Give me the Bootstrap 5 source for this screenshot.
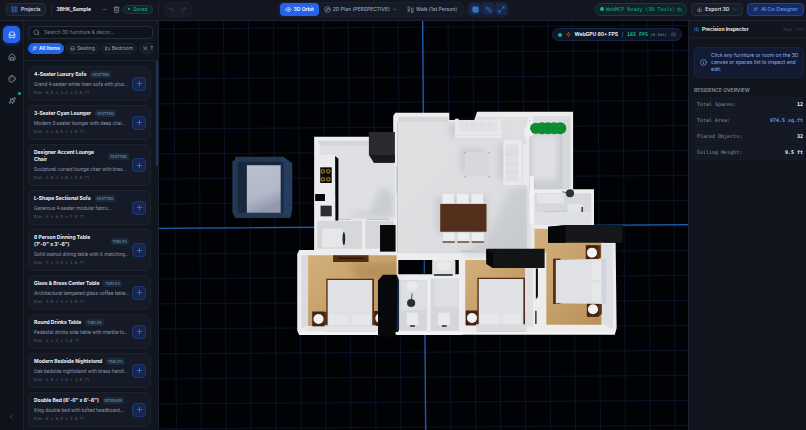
<!DOCTYPE html>
<html lang="en" data-bs-theme="dark">
<head>
<meta charset="utf-8">
<meta name="viewport" content="width=device-width, initial-scale=1">
<title>3BHK_Sample</title>
<link href="https://cdn.jsdelivr.net/npm/bootstrap@5.3.0/dist/css/bootstrap.min.css" rel="stylesheet">
<style>
:root{--ink:#e8edf6;--soft:#94a3b8;--dim:#566379;--line:#1e2433;--panel:#12151f;--card:#161a26;--blue:#2563eb;--sky:#5b9cf0;--green:#10b981}
body{font-family:Inter,"Liberation Sans",sans-serif;font-size:5px;line-height:7px;background:var(--panel);color:var(--ink)}
button,input{font-family:inherit;line-height:inherit}
.mono{font-family:"DejaVu Sans Mono","Liberation Mono",monospace}
.gap-a{gap:1px}.gap-b{gap:2px}.gap-c{gap:3px}.gap-d{gap:5px}
.fill{min-height:0}
.ico{width:7px;height:7px;flex:none;fill:none;stroke:currentColor;stroke-width:2;stroke-linecap:round;stroke-linejoin:round}
.ico-s{width:5px;height:5px}
.ico-l{width:8px;height:8px}
.ico-blue{color:#3b82f6}.ico-soft{color:#94a3b8}.ico-dim{color:#667287}.ico-amber{color:#f59e0b}
.topbar{height:21px;padding:0 2px 2px 6px;border-bottom:1px solid var(--line);background:#131620}
.topbar .rule{margin:0 5px}
.tb{display:inline-flex;align-items:center;justify-content:center;gap:2px;height:13px;padding:0 4px;border:1px solid transparent;border-radius:4px;background:none;color:var(--soft);font-size:5px;font-weight:500;white-space:nowrap}
.tb-box{background:#191e2b;border-color:#272e3e;color:#dbe3f0;gap:3px}
.tb-blue{background:var(--blue);color:#fff;font-weight:600}
.tb-ai{background:#172b62;border-color:#20449a;color:var(--sky);padding:0 5px;gap:3px}
.tb-wide{padding:0 5px;font-weight:600}
.tools{height:15px;padding:0 1px;border:1px solid #1b202d;border-radius:5px;background:#171b27}
.tool{width:12px;height:12px;padding:0;border:0;border-radius:3px;display:flex;align-items:center;justify-content:center;background:none;color:#3b4558}
.tool-on{background:#16294d;color:#4b86dd}
.rule{width:1px;height:12px;background:#20263a}
.rule-s{height:5px;background:#33405a}
.pill{display:inline-flex;align-items:center;height:13px;border:1px solid #12413c;border-radius:9px;background:#10232a;color:var(--green);white-space:nowrap;padding:0 4px;gap:2px}
.pill-s{height:9px;gap:3px}
.led{width:4px;height:4px;border-radius:50%;background:var(--green);flex:none}
.led-s{width:2px;height:2px}
.rail{width:24px;flex:none;padding:5px 0;background:#0f131b;border-right:1px solid #1a1f2c}
.rail-btn{width:17px;height:17px;padding:0;border:0;border-radius:5px;background:none;color:#a3afc2;display:flex;align-items:center;justify-content:center;position:relative}
.rail-on{background:var(--blue);color:#fff;box-shadow:0 1px 4px #2563eb80}
.rail-btn .led{position:absolute;right:-1px;top:0;width:3px;height:3px}
.library{width:135px;flex:none;background:#11151e;border-right:1px solid #1b2130}
.lib-head{padding:5px 5px 6px 4px;border-bottom:1px solid var(--line)}
.search{height:13px;border:1px solid #262d3c;border-radius:4px;padding:0 4px;background:#0f131c;color:#8f9bb0}
.search input{flex:1;min-width:0;border:0;outline:0;background:none;color:inherit;font-size:5px;padding:0}
.search input::placeholder{color:#738096}
.chips{gap:2px;margin-top:4px;overflow:hidden}
.chip{display:inline-flex;align-items:center;gap:2px;height:11px;padding:0 3px;border:1px solid #1d2331;border-radius:6px;background:#171b27;color:var(--soft);font-size:5px;flex:none}
.chip-on{background:var(--blue);border-color:var(--blue);color:#fff;font-weight:600}
.lib-list{padding:5px 5px 5px 4px;gap:4px;overflow:hidden}
.lib-scroll{width:2px;flex:none}
.lib-scroll div{height:105px;border-radius:1px;background:#1d3454}
.item{background:var(--card);border:1px solid #1c212e;border-radius:5px;padding:4px 4px 4px 5px;gap:3px;flex:none}
.item-text{min-width:0}
.item-name{gap:4px}
.item h3{font-size:5px;line-height:7px;font-weight:700;margin:0;color:#f1f5fb;white-space:pre-line}
.item p{margin:2px 0 1px;line-height:8px;color:#8795ab;white-space:nowrap;font-size:5px;font-family:Roboto,Inter,sans-serif}
.item small{display:block;font-size:4px;line-height:7px;color:#59667b}
.tag{font-size:4px;line-height:5px;padding:1px 2px;border-radius:2px;background:#1b2a3a;color:#7391af}
.tag-far{margin-left:auto}
.add{width:14px;height:14px;flex:none;padding:0;border:1px solid #1d3873;border-radius:4px;background:#162650;color:#4c8df0;display:flex;align-items:center;justify-content:center}
.stage{background:#010206;min-width:0}
.fps{position:absolute;top:7px;right:6px;padding:0 5px;gap:4px;border-color:#1a2740;background:#0d1526;color:var(--ink)}
.fps-rate{color:#10b981;font-weight:700}
.fps-ms{font-size:4px;color:#8492a8}
.inspector{width:118px;flex:none;background:#11151e;border-left:1px solid #1b2130}
.inspector h2{font-size:5px;line-height:7px;margin:0;font-weight:600}
.insp-head{height:17px;padding:0 1px 0 5px;border-bottom:1px solid #1a1f2c}
.unit{font-size:4px;color:#4c586c}
.note{margin:9px 2px 0 5px;padding:4px 0 4px 5px;border:1px solid #18244a;border-radius:5px;background:#121a34;color:#8fb4ea;gap:4px}
.overview{margin:9px 2px 0 5px}
.overview h2{color:#8190a6;margin-bottom:3px}
.fact{height:15px;padding:0 1px 0 3px;border-radius:2px;background:#151925;margin-bottom:1px;color:#8794a9}
.fact dd{margin:0;font-weight:700;color:#f1f5fb}
.fact dt{font-weight:400}
.fact .area{color:var(--sky)}
</style>
<script src="https://cdn.jsdelivr.net/npm/bootstrap@5.3.0/dist/js/bootstrap.bundle.min.js"></script>
</head>
<body class="vh-100 d-flex flex-column overflow-hidden">
<svg class="d-none" xmlns="http://www.w3.org/2000/svg">
<symbol id="grid" viewBox="0 0 24 24"><rect x="3" y="3" width="7" height="7" rx="1"/><rect x="14" y="3" width="7" height="7" rx="1"/><rect x="3" y="14" width="7" height="7" rx="1"/><rect x="14" y="14" width="7" height="7" rx="1"/></symbol>
<symbol id="trash" viewBox="0 0 24 24"><path d="M3 6h18M19 6v14a2 2 0 0 1-2 2H7a2 2 0 0 1-2-2V6M8 6V4a2 2 0 0 1 2-2h4a2 2 0 0 1 2 2v2M10 11v6M14 11v6"/></symbol>
<symbol id="dots" viewBox="0 0 24 24"><circle cx="4" cy="12" r="1"/><circle cx="12" cy="12" r="1"/><circle cx="20" cy="12" r="1"/></symbol>
<symbol id="undo" viewBox="0 0 24 24"><path d="M9 14 4 9l5-5M4 9h10.500a5.500 5.500 0 0 1 0 11H11"/></symbol>
<symbol id="redo" viewBox="0 0 24 24"><path d="m15 14 5-5-5-5M20 9H9.500a5.500 5.500 0 0 0 0 11H13"/></symbol>
<symbol id="eye" viewBox="0 0 24 24"><path d="M2 12s4-7 10-7 10 7 10 7-4 7-10 7S2 12 2 12z"/><circle cx="12" cy="12" r="3"/></symbol>
<symbol id="compass" viewBox="0 0 24 24"><circle cx="12" cy="12" r="10"/><path d="m16 8-2 6-6 2 2-6z"/></symbol>
<symbol id="steps" viewBox="0 0 24 24"><path d="M4 15v-3C4 10 3 9 3 6s1-4 3-4 3 2 3 5-1 4-1 6v2zM4 18h4M20 19v-3c0-2 1-3 1-6s-1-4-3-4-3 2-3 5 1 4 1 6v2zM16 22h4"/></symbol>
<symbol id="down" viewBox="0 0 24 24"><path d="m6 9 6 6 6-6"/></symbol>
<symbol id="left" viewBox="0 0 24 24"><path d="m15 18-6-6 6-6"/></symbol>
<symbol id="mesh" viewBox="0 0 24 24"><rect x="3" y="3" width="18" height="18" rx="2" fill="currentColor" fill-opacity=".5"/><path d="M3 9h18M3 15h18M9 3v18M15 3v18"/></symbol>
<symbol id="ruler" viewBox="0 0 24 24"><path d="M21 16 8 3a2 2 0 0 0-3 0L3 5a2 2 0 0 0 0 3l13 13a2 2 0 0 0 3 0l2-2a2 2 0 0 0 0-3zM14 9l-2 2M11 6 9 8M17 12l-2 2"/></symbol>
<symbol id="expand" viewBox="0 0 24 24"><path d="M15 3h6v6M9 21H3v-6M21 3l-7 7M3 21l7-7"/></symbol>
<symbol id="bot" viewBox="0 0 24 24"><rect x="3" y="8" width="18" height="12" rx="3"/><path d="M12 8V4H8M1 14h2M21 14h2M9 13v2M15 13v2"/></symbol>
<symbol id="export" viewBox="0 0 24 24"><path d="M21 15v4a2 2 0 0 1-2 2H5a2 2 0 0 1-2-2v-4M7 10l5 5 5-5M12 15V3"/></symbol>
<symbol id="spark" viewBox="0 0 24 24"><path d="M14 5l2 5 5 2-5 2-2 6-3-5-7 0 5-4-2-6 5 3zM4 20l3-3M20 2v4M18 4h4"/></symbol>
<symbol id="sofa" viewBox="0 0 24 24"><path d="M5 11V6a3 3 0 0 1 3-3h8a3 3 0 0 1 3 3v5M3 11a2 2 0 0 1 4 0v3h10v-3a2 2 0 0 1 4 0v6a2 2 0 0 1-2 2H5a2 2 0 0 1-2-2zM6 19v2M18 19v2"/></symbol>
<symbol id="home" viewBox="0 0 24 24"><path d="M3 10l9-8 9 8v9a2 2 0 0 1-2 2H5a2 2 0 0 1-2-2zM8 21v-8h8v8"/></symbol>
<symbol id="palette" viewBox="0 0 24 24"><path d="M12 2a10 10 0 0 0 0 20c2 0 2-1 2-2 0-2 0-4 3-4h2c2 0 3-2 3-4 0-6-5-10-10-10z"/><path d="M7 12v.1M9 7v.1M14 6v.1M18 10v.1"/></symbol>
<symbol id="search" viewBox="0 0 24 24"><circle cx="11" cy="11" r="8"/><path d="m21 21-4-4"/></symbol>
<symbol id="bed" viewBox="0 0 24 24"><path d="M2 4v16M2 8h18a2 2 0 0 1 2 2v10M2 17h20M6 8v9"/></symbol>
<symbol id="dine" viewBox="0 0 24 24"><path d="m16 2-2 2a3 3 0 0 0 0 4l2 2a3 3 0 0 0 4 0l2-2M15 15 3 3a4 4 0 0 0 0 6l7 6M15 15l6 6M2 22l12-12"/></symbol>
<symbol id="plus" viewBox="0 0 24 24"><path d="M4 12h16M12 4v16"/></symbol>
<symbol id="info" viewBox="0 0 24 24"><circle cx="12" cy="12" r="10"/><path d="M12 16v-4M12 8v.1"/></symbol>
<symbol id="sliders" viewBox="0 0 24 24"><path d="M4 21v-7M4 10V3M12 21v-9M12 8V3M20 21v-5M20 12V3M1 14h6M9 8h6M17 16h6"/></symbol>
<symbol id="bolt" viewBox="0 0 24 24"><path d="M12 2l3 7 7 3-7 3-3 7-3-7-7-3 7-3z"/></symbol>
</svg>

<header class="topbar d-flex align-items-center justify-content-between flex-shrink-0">
  <div class="d-flex align-items-center">
    <button class="tb tb-box" type="button"><svg class="ico ico-blue"><use href="#grid"/></svg>Projects</button>
    <span class="rule"></span>
    <strong>3BHK_Sample</strong>
    <button class="tool ms-2" type="button" aria-label="More"><svg class="ico ico-s ico-dim"><use href="#dots"/></svg></button>
    <button class="tool" type="button" aria-label="Delete"><svg class="ico ico-soft"><use href="#trash"/></svg></button>
    <span class="pill pill-s"><i class="led led-s"></i>Saved</span>
    <span class="rule"></span>
    <div class="tools d-flex align-items-center"><button class="tool" type="button" aria-label="Undo"><svg class="ico"><use href="#undo"/></svg></button><button class="tool" type="button" aria-label="Redo"><svg class="ico"><use href="#redo"/></svg></button></div>
  </div>
  <div class="d-flex align-items-center gap-c">
    <div class="tools d-flex align-items-center">
      <button class="tb tb-blue" type="button"><svg class="ico"><use href="#eye"/></svg>3D Orbit</button>
      <button class="tb" type="button"><svg class="ico"><use href="#compass"/></svg>2D Plan (PERSPECTIVE)<svg class="ico ico-s"><use href="#down"/></svg></button>
      <button class="tb" type="button"><svg class="ico"><use href="#steps"/></svg>Walk (1st Person)</button>
    </div>
    <div class="tools d-flex align-items-center gap-a">
      <button class="tool tool-on" type="button" aria-label="Grid"><svg class="ico"><use href="#mesh"/></svg></button>
      <button class="tool tool-on" type="button" aria-label="Measure"><svg class="ico"><use href="#ruler"/></svg></button>
      <button class="tool tool-on" type="button" aria-label="Dimensions"><svg class="ico"><use href="#expand"/></svg></button>
    </div>
  </div>
  <div class="d-flex align-items-center gap-1">
    <span class="pill mono"><i class="led"></i>WebMCP Ready (38 Tools)<svg class="ico ico-s"><use href="#bot"/></svg></span>
    <button class="tb tb-box tb-wide" type="button"><svg class="ico ico-s"><use href="#export"/></svg>Export 3D<svg class="ico ico-s ico-dim"><use href="#down"/></svg></button>
    <button class="tb tb-ai" type="button"><svg class="ico ico-s"><use href="#spark"/></svg>AI Co-Designer</button>
  </div>
</header>

<div class="d-flex flex-grow-1 fill">
  <nav class="rail d-flex flex-column align-items-center gap-d" aria-label="Sections">
    <button class="rail-btn rail-on" type="button" aria-label="Furniture"><svg class="ico ico-l"><use href="#sofa"/></svg></button>
    <button class="rail-btn" type="button" aria-label="Spaces"><svg class="ico ico-l"><use href="#home"/></svg></button>
    <button class="rail-btn" type="button" aria-label="Materials"><svg class="ico ico-l"><use href="#palette"/></svg></button>
    <button class="rail-btn" type="button" aria-label="Assistant"><svg class="ico ico-l"><use href="#spark"/></svg><i class="led"></i></button>
    <button class="rail-btn mt-auto" type="button" aria-label="Collapse"><svg class="ico ico-dim"><use href="#left"/></svg></button>
  </nav>

  <aside class="library d-flex flex-column">
    <div class="lib-head">
      <label class="search d-flex align-items-center gap-1"><svg class="ico"><use href="#search"/></svg><input type="text" aria-label="Search furniture" placeholder="Search 3D furniture &amp; decor..."></label>
      <div class="chips d-flex">
        <button class="chip chip-on" type="button"><svg class="ico ico-s"><use href="#spark"/></svg>All Items</button>
        <button class="chip" type="button"><svg class="ico ico-s"><use href="#sofa"/></svg>Seating</button>
        <button class="chip" type="button"><svg class="ico ico-s"><use href="#bed"/></svg>Bedroom</button>
        <button class="chip" type="button" aria-label="Tables"><svg class="ico ico-s"><use href="#dine"/></svg>T</button>
      </div>
    </div>
    <div class="d-flex flex-grow-1 fill">
      <div class="lib-list d-flex flex-column flex-grow-1" id="items"></div>
      <div class="lib-scroll"><div></div></div>
    </div>
  </aside>

  <main class="stage position-relative flex-grow-1">
    <svg class="d-block w-100 h-100" viewBox="159 21 529 409" preserveAspectRatio="xMidYMid slice" role="img" aria-label="3D floor plan">
      <defs>
        <pattern id="tiles" width="73.8" height="75" patternUnits="userSpaceOnUse" patternTransform="translate(781 620) rotate(-.38)"><path d="M0 0H73.800M0 0V75" stroke="#14264a" stroke-width="4" fill="none"/></pattern>
        <linearGradient id="wood" x2="1" y2="1"><stop stop-color="#d3b07c"/><stop offset="1" stop-color="#b99159"/></linearGradient>
        <linearGradient id="floor" x2="1" y2="1"><stop stop-color="#e0e1e2"/><stop offset=".7" stop-color="#dcdde0"/><stop offset="1" stop-color="#cbced2"/></linearGradient>
        <linearGradient id="glass" x2=".3" y2="1"><stop stop-color="#bbc1cf"/><stop offset=".7" stop-color="#b2b8c8"/><stop offset="1" stop-color="#929aaf"/></linearGradient>
        <filter id="soft"><feGaussianBlur stdDeviation="9"/></filter>
        <g id="bed2"><path d="M-4-4H137V160H-4z" fill="#542d14"/><path d="M0 0H132V150L138 158H-6L0 150z" fill="#dfe1e4"/><path d="M4 104H60V136H4zM72 104H126V136H72z" fill="#e6e7ea"/><path d="M-8 136H142V158H-8z" fill="#d9dbdf"/></g>
        <g id="stand"><path d="M0 0H44V36L34 44H0z" fill="#5a3015"/><path d="M0 0H34V44H0z" fill="#432310"/><circle cx="18" cy="22" r="15" fill="#f2f2f2"/></g>
        <g id="chairs" fill="#eceef0" stroke="#dcdee1"><path d="M0 0H35V28H0zM43 0H78V28H43zM86 0H121V28H86z"/></g>
      </defs>
      <rect x="159" y="21" width="529" height="409" fill="#010206"/>
      <g transform="translate(160 20) scale(.338 .3333)">
        <path d="M-300-20H1900V1260H-300z" fill="url(#tiles)" opacity=".6"/>
        <path d="M777 0l9 1235M-10 625l1580-11" stroke="#1c5fae" stroke-width="4" fill="none"/>
        <!-- detached room -->
        <path d="M222 410H365L391 430V570L386 594H222L214 576V424L222 420z" fill="#233852"/>
        <path d="M230 425H358V578H230z" fill="#17273c"/><path d="M357 424L365 412 391 430V570L386 592 357 578z" fill="#263e5d"/>
        <path d="M357 425H366V578H357z" fill="#1a2c44"/><path d="M257 436H357V578H257z" fill="url(#glass)"/>
        <!-- building shell -->
        <path d="M696 278H856V300H930L938 275H1222V508H1284V615H1312V668H1348L1351 925 1346 942H895V945H412L406 932V702L412 690H456V350H690V288z" fill="#ededee"/>
        <!-- kitchen -->
        <path d="M473 377H620L695 420V596H473z" fill="#dfe0e3"/><path d="M466 362H620V377H473z" fill="#d3d5d9"/>
        <path d="M655 500L690 520V590H560L580 575 620 575z" fill="#c9ccd1" filter="url(#soft)"/>
        <path d="M470 405H520V600H470z" fill="#e9ebed"/><path d="M518 408L528 416V602H519z" fill="#08090b"/>
        <path d="M474 442H508V489H474z" fill="#090a09"/><g fill="none" stroke="#8a6813" stroke-width="4"><circle cx="482" cy="454" r="5"/><circle cx="498" cy="454" r="5"/><circle cx="482" cy="478" r="5"/><circle cx="498" cy="478" r="5"/></g>
        <path d="M459 522H488V543H459z" fill="#07080a"/><path d="M475 557H508V589H475z" fill="#2b2d31"/>
        <path d="M618 336H695V416L690 428H633L618 405z" fill="#2a2b2e"/><path d="M620 405H695V428H633z" fill="#191a1d"/>
        <path d="M465 602H598V686H465zM607 602H692V686H607z" fill="#d5d7db"/><path d="M480 626H540V682H480z" fill="#e6e7e9"/><ellipse cx="544" cy="656" rx="4" ry="20" fill="#222529"/><path d="M651 615H697V695H651z" fill="#07080a"/><path d="M528 598H565M612 598H680" stroke="#a4a8ad" stroke-width="2"/>
        <!-- living -->
        <path d="M705 305H1085V700H705z" fill="url(#floor)"/><path d="M707 290H853V306H704z" fill="#d5d6d8"/><path d="M938 290H1090L1078 355H940z" fill="#dedfe1"/>
        <path d="M703 306V700M700 440V520" stroke="#c4c7cc" stroke-width="3"/>
        <path d="M1030 510L1092 500V706H890L980 640z" fill="#c3c6cb" opacity=".6" filter="url(#soft)"/>
        <path d="M855 310H1000V350H855zM1000 370H1030V480H1000zM888 385H960V460H888zM815 530H970V640H815z" fill="#b8bbc2" opacity=".5" filter="url(#soft)"/>
        <path d="M873 296H884V300H998V296H1009L1012 354H873z" fill="#e9e9eb"/><path d="M884 302H998V334H884z" fill="#e1e2e5"/><path d="M907 302V334M930 302V334M953 302V334M976 302V334M876 345H1008" stroke="#d8dade" stroke-width="2"/>
        <path d="M1020 360H1070V372H1088V495H1016V372z" fill="#eaeaec"/><path d="M1022 374H1060V484H1022z" fill="#dfe0e3"/><path d="M1022 402H1060M1022 430H1060M1022 458H1060M1072 374V484" stroke="#d2d4d8" stroke-width="2"/>
        <path d="M903 398H974V470H903z" fill="#d7d8dc" stroke="#dfe0e2" stroke-width="2"/><g fill="#888d94"><circle cx="903" cy="398" r="2"/><circle cx="974" cy="398" r="2"/><circle cx="903" cy="470" r="2"/><circle cx="974" cy="470" r="2"/></g>
        <use href="#chairs" x="835" y="522"/><use href="#chairs" x="837" y="638"/><path d="M829 552H966V635H829z" fill="#54301c"/><path d="M836 666H872M880 666H915M922 666H958" stroke="#674b39" stroke-width="4"/>
        <!-- balcony -->
        <path d="M1092 300H1205V508H1092z" fill="#c9ccd2"/><path d="M1100 345H1175V480H1100z" fill="#e0e1e4" filter="url(#soft)"/><path d="M1190 310L1215 285V505H1190z" fill="#d6d8dc"/><path d="M1100 288H1212L1190 308H1105z" fill="#dcdee1"/><path d="M1077 330L1104 288V345L1082 360z" fill="#eceef0"/>
        <g fill="#0b8a32"><circle cx="1112" cy="325" r="17"/><circle cx="1130" cy="325" r="18"/><circle cx="1148" cy="325" r="18"/><circle cx="1166" cy="325" r="18"/><circle cx="1184" cy="325" r="18"/></g><path d="M1105 315q12-8 20 0t20 0 20 0 22 0M1105 334q12 8 20 0t20 0 20 0 22 0" stroke="#0f983b" stroke-width="3" fill="none"/>
        <!-- bath, upper right -->
        <path d="M1108 520H1276V614H1108z" fill="#d6d8dc"/><path d="M1115 522H1195V550H1115zM1206 552H1250V575H1206z" fill="#e4e5e8"/><path d="M1108 576H1276V614H1108z" fill="#dfe0e3"/><path d="M1140 576L1205 572" stroke="#b9bdc2" stroke-width="2"/><path d="M1190 515L1212 520" stroke="#5c6168" stroke-width="3"/><circle cx="1213" cy="520" r="12" fill="#2e3135"/><path d="M1249 561V576" stroke="#222" stroke-width="4"/>
        <path d="M1094 468H1106V610H1094z" fill="#f2f2f3"/>
        <!-- bedroom 1 -->
        <path d="M438 706H700V918H438z" fill="url(#wood)"/><path d="M418 706H438V918L418 926z" fill="#d9dbdf"/><path d="M560 730H700V780H590z" fill="#a07a47" opacity=".4" filter="url(#soft)"/><path d="M512 706H617V726H512z" fill="#542c14"/><path d="M528 715H602" stroke="#26140a" stroke-width="4"/>
        <use href="#stand" x="451" y="875"/><use href="#stand" x="634" y="873"/><use href="#bed2" x="496" y="780"/><path d="M438 920H645V934H425z" fill="#e2e3e6"/>
        <path d="M646 780L660 764H700L707 780V930L697 950H645z" fill="#08090b"/><path d="M703 780L708 785V925L700 935z" fill="#18294a"/>
        <!-- bathrooms -->
        <path d="M705 720H806V763H705zM872 720H884V763H872z" fill="#020307"/><path d="M782 720V763" stroke="#14508f" stroke-width="4"/><path d="M806 722H874V762H806z" fill="#dfe1e4"/><ellipse cx="840" cy="738" rx="22" ry="14" fill="#e9eaec"/><path d="M810 765H866" stroke="#222b36" stroke-width="5"/>
        <path d="M708 780H790V932H708zM801 776H884V932H801z" fill="#d4d6da"/><path d="M714 782H788V870H714zM812 776H882V860H812z" fill="#dddfe3"/><ellipse cx="746" cy="798" rx="17" ry="15" fill="#e9eaec"/><path d="M746 820L743 846" stroke="#555" stroke-width="3"/><circle cx="743" cy="849" r="12" fill="#2b2e32"/>
        <path d="M730 878H764V915H730zM822 878H858V915H822z" fill="#e9eaec"/><path d="M740 918H754M834 918H848" stroke="#25282c" stroke-width="5"/>
        <!-- bedroom 2 -->
        <path d="M903 720H1080V915H903z" fill="url(#wood)"/><use href="#stand" x="905" y="872"/><path d="M1076 872H1090V910H1080z" fill="#542c14"/><use href="#bed2" x="943" y="777"/><path d="M1080 740H1104V920H1080z" fill="#dee0e3"/><path d="M890 694H942" stroke="#bfc6ce" stroke-width="5"/>
        <path d="M1112 745H1118V830L1112 838z" fill="#0b0c0f"/><path d="M1112 872V912" stroke="#65432c" stroke-width="5"/>
        <!-- bedroom 3 -->
        <path d="M1108 626H1306V914H1143V700L1108 690z" fill="url(#wood)"/><path d="M1108 690H1140V745H1108z" fill="#eff0f1"/><path d="M965 686H1138V744H985L966 732z" fill="#131415"/><path d="M965 690L985 700V744L966 732z" fill="#050607"/>
        <use href="#stand" x="1260" y="676"/><use href="#stand" x="1263" y="846"/><path d="M1163 716H1185V852H1163z" fill="#542c14"/><path d="M1171 720L1310 716V852L1171 850z" fill="#dfe1e4"/><path d="M1278 724H1308V780H1278zM1278 788H1308V846H1278z" fill="#e6e7ea"/><path d="M1308 672H1340V926L1308 912z" fill="#dddfe4"/><path d="M1306 716H1320V852H1306z" fill="#d0d4df"/>
        <path d="M1148 620L1200 615H1368V668H1148z" fill="#161718"/><path d="M1148 620L1200 616V668H1148z" fill="#060708"/>
        <path d="M412 940H1346" stroke="#f3f3f3" stroke-width="8"/><path d="M645 780H697V950H645z" fill="#08090b"/>
      </g>
    </svg>
    <div class="pill fps"><i class="led"></i><svg class="ico ico-s ico-amber"><use href="#bolt"/></svg><strong>WebGPU 60+ FPS</strong><span class="rule rule-s"></span><span class="mono d-flex gap-b"><span class="fps-rate">165 FPS</span><span class="fps-ms">(6.1ms)</span></span><svg class="ico ico-s ico-dim"><use href="#sliders"/></svg></div>
  </main>

  <aside class="inspector">
    <div class="insp-head d-flex align-items-center justify-content-between">
      <h2 class="d-flex align-items-center gap-c"><svg class="ico ico-s ico-blue"><use href="#sliders"/></svg>Precision Inspector</h2>
      <span class="mono unit">Foot (ft)</span>
    </div>
    <div class="note d-flex align-items-center"><svg class="ico"><use href="#info"/></svg><span>Click any furniture or room on the 3D canvas or spaces list to inspect and edit.</span></div>
    <div class="overview">
      <h2>RESIDENCE OVERVIEW</h2>
      <dl class="mono m-0">
        <div class="fact d-flex align-items-center justify-content-between"><dt>Total Spaces:</dt><dd>12</dd></div>
        <div class="fact d-flex align-items-center justify-content-between"><dt>Total Area:</dt><dd class="area">974.5 sq.ft</dd></div>
        <div class="fact d-flex align-items-center justify-content-between"><dt>Placed Objects:</dt><dd>32</dd></div>
        <div class="fact d-flex align-items-center justify-content-between"><dt>Ceiling Height:</dt><dd>9.5 ft</dd></div>
      </dl>
    </div>
  </aside>
</div>
<script>
const catalog = [
  ['4-Seater Luxury Sofa','SEATING','Grand 4-seater white linen sofa with plus…','8.5 × 3.2 × 2.8'],
  ['3-Seater Cyan Lounger','SEATING','Modern 3-seater lounger with deep chai…','3 × 6.5 × 2.8'],
  ['Designer Accent Lounge\nChair','SEATING','Sculptural curved lounge chair with bras…','2.8 × 2.8 × 2.8'],
  ['L-Shape Sectional Sofa','SEATING','Generous 4-seater modular fabric…','9 × 6.5 × 2.8'],
  ['6 Person Dinning Table\n(7\'-0" x 3\'-6")','TABLES','Solid walnut dining table with 6 matching…','7 × 3.5 × 2.6'],
  ['Glass & Brass Center Table','TABLES','Architectural tempered glass coffee table…','4.5 × 3 × 1.5'],
  ['Round Drinks Table','TABLES','Pedestal drinks side table with marble to…','2 × 2 × 1.8'],
  ['Modern Bedside Nightstand','TABLES','Oak bedside nightstand with brass handl…','1.8 × 1.6 × 1.8'],
  ['Double Bed (6\'-0" x 6\'-6")','BEDROOM','King double bed with tufted headboard,…','6 × 6.5 × 3.8']
];
document.getElementById('items').innerHTML = catalog.map(([name, tag, text, size]) => `
  <article class="item d-flex align-items-center">
    <div class="item-text flex-grow-1">
      <div class="item-name d-flex align-items-center"><h3>${name.replace('&','&amp;')}</h3><span class="tag mono ${name.includes('\n') ? 'tag-far' : ''}">${tag}</span></div>
      <p>${text}</p><small class="mono">Dim: ${size} ft</small>
    </div>
    <button class="add" type="button" aria-label="Add item"><svg class="ico"><use href="#plus"/></svg></button>
  </article>`).join('');
</script>
</body>
</html>
